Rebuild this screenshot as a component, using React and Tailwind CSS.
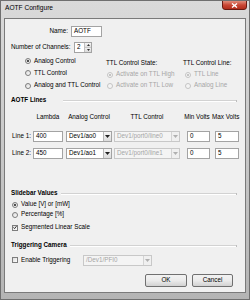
import React from 'react';

const Radio = ({ checked, disabled, children, className = '' }) => (
  <div className={`flex items-center ${className}`}>
    <span
      className={`w-[6px] h-[6px] rounded-full border flex items-center justify-center shrink-0 ${
        disabled ? 'border-[#c4c4c4] bg-[#f4f4f4]' : 'border-[#7d7d7d] bg-gradient-to-br from-[#d8d8d8] to-white'
      }`}
    >
      {checked && <span className={`w-[2px] h-[2px] rounded-full ${disabled ? 'bg-[#b4b4b4]' : 'bg-[#1c1c1c]'}`} />}
    </span>
    <span className={`ml-[3px] whitespace-nowrap ${disabled ? 'text-[#a6a6a6]' : 'text-black'}`}>{children}</span>
  </div>
);

const Check = ({ checked, children, className = '' }) => (
  <div className={`flex items-center ${className}`}>
    <span className="w-[6px] h-[6px] border border-[#7d7d7d] bg-gradient-to-br from-[#dcdcdc] to-white flex items-center justify-center shrink-0">
      {checked && (
        <svg width="5" height="5" viewBox="0 0 5 5">
          <path d="M0.6 2.4 L2 3.9 L4.4 0.8" fill="none" stroke="#222" strokeWidth="1.1" />
        </svg>
      )}
    </span>
    <span className="ml-[3px] whitespace-nowrap">{children}</span>
  </div>
);

const Field = ({ value, className = '' }) => (
  <div className={`h-[11px] border border-[#a3a3a3] bg-white flex items-center pl-[2px] ${className}`}>{value}</div>
);

const Combo = ({ value, disabled, className = '' }) => (
  <div
    className={`h-[11px] border flex items-stretch ${
      disabled ? 'border-[#c8c8c8] bg-[#f4f4f4] text-[#a6a6a6]' : 'border-[#a3a3a3] bg-white text-black'
    } ${className}`}
  >
    <div className="flex-1 flex items-center pl-[2px] whitespace-nowrap overflow-hidden">{value}</div>
    <div
      className={`w-[8px] border-l flex items-center justify-center ${
        disabled ? 'border-[#d4d4d4] bg-[#f0f0f0]' : 'border-[#b8b8b8] bg-gradient-to-b from-[#f6f6f6] to-[#dcdcdc]'
      }`}
    >
      <svg width="5" height="3" viewBox="0 0 5 3">
        <path d="M0 0 H5 L2.5 3 Z" fill={disabled ? '#b0b0b0' : '#222'} />
      </svg>
    </div>
  </div>
);

const Section = ({ title, gap = 'ml-[3px]' }) => (
  <div className="flex items-center h-[10px] w-[226px]">
    <span className="font-bold whitespace-nowrap">{title}</span>
    <div className={`flex-1 ${gap} border-t border-[#d2d2d2] border-b border-b-white`} />
    <div className="w-px h-[2px] bg-[#bdbdbd]" />
  </div>
);

const Button = ({ children, className = '' }) => (
  <div
    className={`h-[13px] rounded-[2px] border border-[#707070] bg-gradient-to-b from-[#f2f2f2] via-[#ebebeb] to-[#d2d2d2] flex items-center justify-center ${className}`}
  >
    {children}
  </div>
);

export default function App() {
  const lines = [
    { label: 'Line 1:', lambda: '400', ao: 'Dev1/ao0', ttl: 'Dev1/port0/line0' },
    { label: 'Line 2:', lambda: '450', ao: 'Dev1/ao1', ttl: 'Dev1/port0/line1' },
  ];

  return (
    <div className="w-[250px] h-[300px] flex flex-col bg-gradient-to-b from-[#dadada] via-[#c8c8c8] to-[#b4b4b4] border border-[#6f6f6f] font-['Liberation_Sans',Arial,sans-serif] text-[6.3px] leading-none text-black overflow-hidden">
      {/* Title bar */}
      <div className="h-[17px] flex items-start shrink-0">
        <span className="ml-[4px] mt-[4px] text-[6.6px]">AOTF Configure</span>
        <div className="ml-auto mr-[2px] w-[25px] h-[10px] -mt-px rounded-b-[3px] border border-[#6a1a12] bg-gradient-to-b from-[#e08c7c] via-[#c94634] to-[#b22d1c] flex items-center justify-center">
          <svg width="7" height="5" viewBox="0 0 7 5">
            <path d="M1 0.5 L6 4.5 M6 0.5 L1 4.5" stroke="white" strokeWidth="1.4" />
          </svg>
        </div>
      </div>

      {/* Client area */}
      <div className="mx-[3px] h-[275px] shrink-0 bg-[#f0f0f0] border border-[#7a7a7a] pl-[6px] flex flex-col">
        {/* Name */}
        <div className="mt-[7px] flex items-center">
          <span className="w-[57px] text-right">Name:</span>
          <Field value="AOTF" className="ml-[3px] w-[31px]" />
        </div>

        {/* Channels */}
        <div className="mt-[5px] flex items-center">
          <span className="w-[60px] whitespace-nowrap">Number of Channels:</span>
          <div className="ml-[3px] w-[18px] h-[11px] border border-[#a3a3a3] bg-white flex">
            <span className="flex-1 pl-[2px] flex items-center">2</span>
            <div className="w-[7px] flex flex-col border-l border-[#c0c0c0]">
              <div className="flex-1 bg-gradient-to-b from-[#f6f6f6] to-[#e0e0e0] border-b border-[#c8c8c8] flex items-center justify-center">
                <svg width="3" height="2" viewBox="0 0 3 2"><path d="M0 2 H3 L1.5 0 Z" fill="#333" /></svg>
              </div>
              <div className="flex-1 bg-gradient-to-b from-[#f0f0f0] to-[#dadada] flex items-center justify-center">
                <svg width="3" height="2" viewBox="0 0 3 2"><path d="M0 0 H3 L1.5 2 Z" fill="#333" /></svg>
              </div>
            </div>
          </div>
        </div>

        {/* Control mode */}
        <div className="mt-[2px] flex">
          <div className="ml-[14px] w-[81px] flex flex-col">
            <Radio checked className="h-[12px]">Analog Control</Radio>
            <Radio className="h-[12.5px]">TTL Control</Radio>
            <Radio className="h-[12px]">Analog and TTL Control</Radio>
          </div>
          <div className="w-[77px] pt-[3px] flex flex-col">
            <span className="h-[11px] flex items-center">TTL Control State:</span>
            <Radio checked disabled className="h-[11px] ml-px">Activate on TTL High</Radio>
            <Radio disabled className="h-[11px] ml-px">Activate on TTL Low</Radio>
          </div>
          <div className="pt-[3px] flex flex-col">
            <span className="h-[11px] flex items-center">TTL Control Line:</span>
            <Radio checked disabled className="h-[11px] ml-[2px]">TTL Line</Radio>
            <Radio disabled className="h-[11px] ml-[2px]">Analog Line</Radio>
          </div>
        </div>

        {/* AOTF Lines */}
        <div className="mt-[4px]">
          <Section title="AOTF Lines" gap="ml-[17px]" />
        </div>

        <div className="mt-[7px] h-[10px] flex items-center">
          <span className="w-[22px]" />
          <span className="w-[30px] text-center">Lambda</span>
          <span className="ml-[3px] w-[46px] text-center">Analog Control</span>
          <span className="ml-[2px] w-[66px] text-center">TTL Control</span>
          <span className="ml-[4px] w-[26px] text-center whitespace-nowrap">Min Volts</span>
          <span className="ml-[2px] w-[26px] text-center whitespace-nowrap">Max Volts</span>
        </div>

        {lines.map((l, i) => (
          <div key={l.label} className={`${i === 0 ? 'mt-[8px]' : 'mt-[6px]'} flex items-center`}>
            <span className="w-[22px] pl-px">{l.label}</span>
            <Field value={l.lambda} className="w-[30px]" />
            <Combo value={l.ao} className="ml-[3px] w-[46px]" />
            <Combo value={l.ttl} disabled className="ml-[2px] w-[66px]" />
            <Field value="0" className="ml-[7px] w-[23px]" />
            <Field value="5" className="ml-[5px] w-[24px]" />
          </div>
        ))}

        {/* Slidebar Values */}
        <div className="mt-[30px]">
          <Section title="Slidebar Values" />
        </div>
        <Radio checked className="mt-[1px] h-[10px] ml-px">Value [V] or [mW]</Radio>
        <Radio className="h-[10px] ml-px">Percentage [%]</Radio>
        <Check checked className="mt-[3px] h-[10px] ml-px">Segmented Linear Scale</Check>

        {/* Triggering Camera */}
        <div className="mt-[8px]">
          <Section title="Triggering Camera" />
        </div>
        <div className="mt-[4px] flex items-center">
          <Check className="w-[72px] ml-px">Enable Triggering</Check>
          <Combo value="/Dev1/PFI0" disabled className="-ml-px w-[69px]" />
        </div>

        {/* Buttons */}
        <div className="mt-[8px] flex">
          <Button className="ml-[134px] w-[42px]">OK</Button>
          <Button className="ml-[5px] w-[41px]">Cancel</Button>
        </div>
      </div>
    </div>
  );
}
